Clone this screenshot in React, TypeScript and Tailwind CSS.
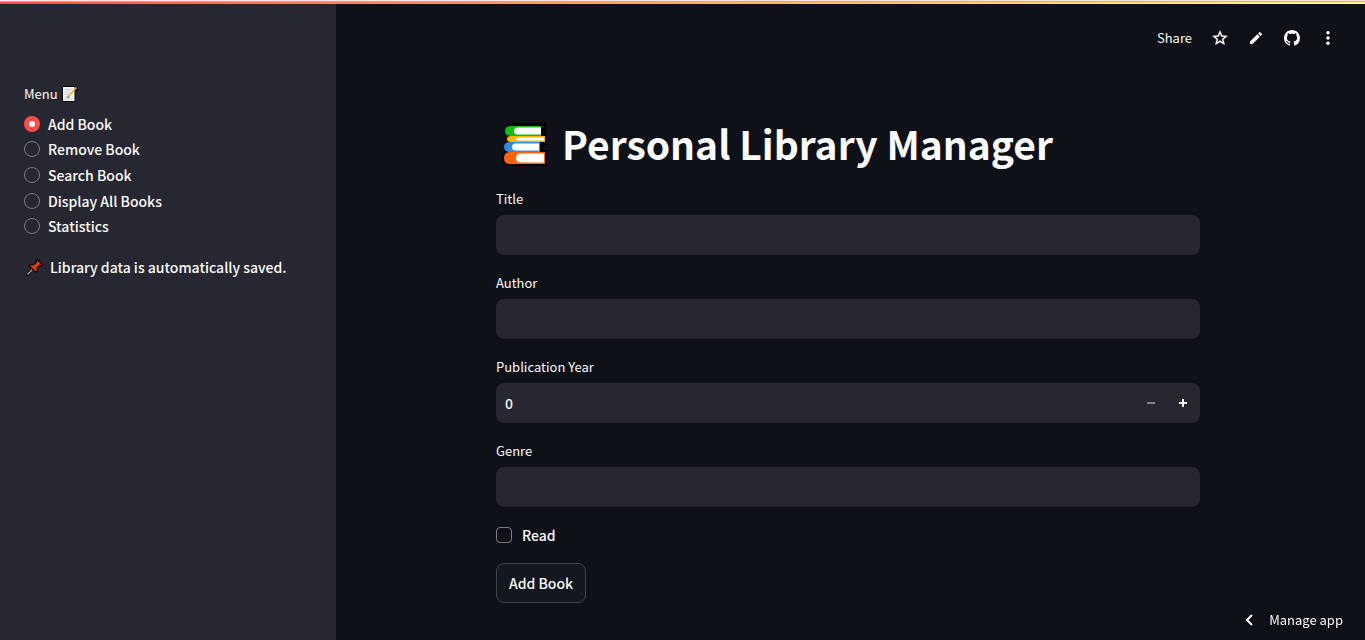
import { useState } from "react";

const menuItems = ["Add Book", "Remove Book", "Search Book", "Display All Books", "Statistics"];

function MemoIcon() {
  return (
    <svg viewBox="0 0 16 16" className="h-4 w-4 shrink-0" aria-hidden="true">
      <path d="M0 0h12l4 1v3l-2.500 2v10H0z" fill="#08080a" />
      <path d="M1 1h11.500v14H1z" fill="#f3f3f5" />
      <path d="M2.500 3.500h7M2.500 6h6M2.500 8.500h4M2.500 11h4M2.500 13h8" stroke="#c4c6cc" strokeWidth="1" />
      <path d="M6.500 10.500 13 3" stroke="#e9b43c" strokeWidth="1.800" />
      <path d="m5.500 12 .4-2 1.700 1.400z" fill="#4b4234" />
      <path d="m13 3 1.500-1.500" stroke="#c99b92" strokeWidth="2" />
    </svg>
  );
}

function PinIcon() {
  return (
    <svg viewBox="0 0 18 18" className="h-[18px] w-[18px] shrink-0" aria-hidden="true">
      <path d="M1.500 16.500 7 11" stroke="#050506" strokeWidth="3" strokeLinecap="round" />
      <path d="M1.500 16.500 7 11" stroke="#a8adb5" strokeWidth="1.200" />
      <path
        d="m11.300 1.500 5.200 5.200-1.500 1-1.200-.4-2.600 2.800.2 3-1.600 1.300-6.600-6.600 1.500-1.300 3 .2 2.700-2.700-.4-1.400z"
        fill="#e8390e"
        stroke="#08080a"
        strokeWidth="1.300"
        strokeLinejoin="round"
      />
      <path d="m8 7.500 2.800 2.800" stroke="#a92b10" strokeWidth="1" />
    </svg>
  );
}

function BooksIcon() {
  return (
    <svg viewBox="0 0 46 46" className="h-[46px] w-[46px] shrink-0" aria-hidden="true">
      <path
        d="M8 1h36v12h1v10h-3v5h3v16H8Q0 44 0 36q0-4 3-7-1-2-1-4 0-5 4-8-1-4-2-7 0-6 4-9z"
        fill="#020203"
      />
      <path d="M39 4H9q-6 0-6 5t6 5h30v-2H16V6h23z" fill="#14bd12" />
      <path d="M39 5.500H16q-4 0-4 3.500t4 3.500h23z" fill="#fff" />
      <path d="M43 14H9q-4 0-4 3t4 3h34z" fill="#ffb500" />
      <path d="M42 15.500H16q-2 0-2 1.500t2 1.500h26z" fill="#fff" />
      <path d="M38 20H8q-6 0-6 5t6 5h30z" fill="#318de0" />
      <path d="M37 21.500H14q-4 0-4 3.500t4 3.500h23z" fill="#fff" />
      <path d="M43 30H8q-6 0-6 6t6 6h35z" fill="#fb640c" />
      <path d="M42 31.500H19q-5 0-5 4.500t5 4.500h23z" fill="#fff" />
    </svg>
  );
}

function TextField({ id, label }: { id: string; label: string }) {
  return (
    <div>
      <label htmlFor={id} className="mb-1 block h-6 text-[13px] leading-6">
        {label}
      </label>
      <input
        id={id}
        type="text"
        className="block h-10 w-full rounded-lg bg-[#262730] px-2 text-sm font-medium outline-none focus:ring-1 focus:ring-[#ff4b4b]"
      />
    </div>
  );
}

export default function App() {
  const [page, setPage] = useState(menuItems[0]);
  const [year, setYear] = useState(0);

  return (
    <div className="flex min-h-screen flex-col bg-[#0e1117] font-['Noto_Sans_CJK_SC','Noto_Sans',sans-serif] text-[#fafafa]">
      <div className="h-0.5 border-b border-[#c9a5b5] bg-[#fbe3e6]" />
      <div className="h-0.5 bg-linear-to-r from-[#ff4b4b] to-[#fffd80]" />
      <div className="flex grow">
        <aside className="w-84 shrink-0 bg-[#262730] px-6 pt-[78px]">
          <fieldset>
            <legend className="mb-[5px] flex h-6 items-center gap-1 text-[13px]">
              Menu <MemoIcon />
            </legend>
            <div className="grid h-32 grid-rows-5">
              {menuItems.map((item) => (
                <label key={item} className="flex items-center gap-2 text-sm leading-6 font-medium">
                  <input
                    type="radio"
                    name="menu"
                    checked={page === item}
                    onChange={() => setPage(item)}
                    className="h-4 w-4 appearance-none rounded-full border border-[#7b7c86] checked:border-5 checked:border-[#ff4b4b] checked:bg-[#fafafa]"
                  />
                  {item}
                </label>
              ))}
            </div>
          </fieldset>
          <p className="mt-4 flex items-center gap-1.5 pl-0.5 text-sm leading-6 font-medium">
            <PinIcon />
            Library data is automatically saved.
          </p>
        </aside>

        <div className="min-w-0 grow">
          <header className="flex h-17 items-center justify-end gap-4 pr-[27px] text-[13px]">
            <button type="button" className="mr-0.5">
              Share
            </button>
            <button type="button" aria-label="Favorite" className="flex w-5 justify-center">
              <svg
                viewBox="0 0 24 24"
                className="h-[18px] w-[18px]"
                fill="currentColor"
                stroke="currentColor"
                strokeWidth="0.5"
              >
                <path d="m22 9.240-7.190-.62L12 2 9.190 8.630 2 9.240l5.460 4.730L5.820 21 12 17.270 18.180 21l-1.630-7.030L22 9.240zM12 15.400l-3.760 2.270 1-4.280-3.320-2.880 4.380-.38L12 6.100l1.710 4.040 4.380.38-3.320 2.880 1 4.280L12 15.400z" />
              </svg>
            </button>
            <button type="button" aria-label="Edit" className="flex w-5 justify-center">
              <svg viewBox="0 0 24 24" className="h-4 w-4" fill="currentColor">
                <path d="M3 17.250V21h3.750L17.810 9.940l-3.750-3.750L3 17.250zM20.710 7.040a1 1 0 0 0 0-1.410l-2.340-2.340a1 1 0 0 0-1.410 0l-1.830 1.830 3.750 3.750 1.830-1.830z" />
              </svg>
            </button>
            <button type="button" aria-label="View source" className="flex w-5 justify-center">
              <svg viewBox="0 0 16 16" className="h-4 w-4" fill="currentColor">
                <path d="M8 0C3.580 0 0 3.580 0 8c0 3.540 2.290 6.530 5.470 7.590.4.070.55-.17.55-.38 0-.19-.01-.82-.01-1.490-2.010.37-2.530-.49-2.690-.94-.09-.23-.48-.94-.82-1.130-.28-.15-.68-.52-.01-.53.63-.01 1.080.58 1.230.82.72 1.210 1.870.87 2.330.66.070-.52.28-.87.51-1.070-1.780-.2-3.640-.89-3.640-3.950 0-.87.31-1.590.82-2.150-.08-.2-.36-1.020.08-2.120 0 0 .67-.21 2.200.82.64-.18 1.320-.27 2-.27s1.360.09 2 .27c1.530-1.040 2.200-.82 2.200-.82.44 1.100.16 1.920.08 2.120.51.56.82 1.270.82 2.150 0 3.070-1.870 3.750-3.650 3.950.29.25.54.73.54 1.480 0 1.070-.01 1.930-.01 2.200 0 .21.15.46.55.38A8.010 8.010 0 0 0 16 8c0-4.420-3.580-8-8-8z" />
              </svg>
            </button>
            <button type="button" aria-label="More options" className="flex w-5 justify-center">
              <svg viewBox="0 0 24 24" className="h-[18px] w-[18px]" fill="currentColor">
                <circle cx="12" cy="5" r="2.300" />
                <circle cx="12" cy="12" r="2.300" />
                <circle cx="12" cy="19" r="2.300" />
              </svg>
            </button>
          </header>

          <main className="pr-[5px]">
            <div className="mx-auto flex max-w-184 flex-col gap-4 px-4 pt-[47px] pb-9">
              <h1 className="flex h-[52px] items-center gap-3.5 pl-1.5 text-[39px] leading-none font-bold">
                <BooksIcon />
                <span className="pb-1">Personal Library Manager</span>
              </h1>
              <TextField id="title" label="Title" />
              <TextField id="author" label="Author" />
              <div>
                <label htmlFor="year" className="mb-1 block h-6 text-[13px] leading-6">
                  Publication Year
                </label>
                <div className="flex h-10 overflow-hidden rounded-lg bg-[#262730] px-px">
                  <input
                    id="year"
                    type="text"
                    inputMode="numeric"
                    value={year}
                    onChange={(e) => setYear(Number(e.target.value) || 0)}
                    className="min-w-0 grow px-2 text-sm font-medium outline-none"
                  />
                  <button
                    type="button"
                    aria-label="Decrease year"
                    disabled={year === 0}
                    onClick={() => setYear(year - 1)}
                    className="flex w-8 items-center justify-center disabled:text-[#808291]"
                  >
                    <svg viewBox="0 0 8 8" className="h-2 w-2" fill="currentColor">
                      <path d="M0 3h8v2H0z" />
                    </svg>
                  </button>
                  <button
                    type="button"
                    aria-label="Increase year"
                    onClick={() => setYear(year + 1)}
                    className="flex w-8 items-center justify-center"
                  >
                    <svg viewBox="0 0 8 8" className="h-2 w-2" fill="currentColor">
                      <path d="M3 0h2v3h3v2H5v3H3V5H0V3h3z" />
                    </svg>
                  </button>
                </div>
              </div>
              <TextField id="genre" label="Genre" />
              <label className="flex h-6 items-center gap-2.5 self-start text-sm font-medium">
                <input
                  type="checkbox"
                  className="h-4 w-4 appearance-none rounded border border-[#7b7c82] checked:border-[#ff4b4b] checked:bg-[#ff4b4b]"
                />
                Read
              </label>
              <button
                type="button"
                className="h-10 self-start rounded-lg border border-[#41444c] bg-[#131720] px-3 text-sm font-medium"
              >
                Add Book
              </button>
            </div>
          </main>
        </div>
      </div>

      <button type="button" className="fixed right-[22px] bottom-2 flex h-6 items-center gap-4 text-[13px]">
        <svg viewBox="0 0 8 12" className="h-3 w-2" fill="none" stroke="currentColor" strokeWidth="2">
          <path d="M7 1 2 6l5 5" />
        </svg>
        Manage app
      </button>
    </div>
  );
}
